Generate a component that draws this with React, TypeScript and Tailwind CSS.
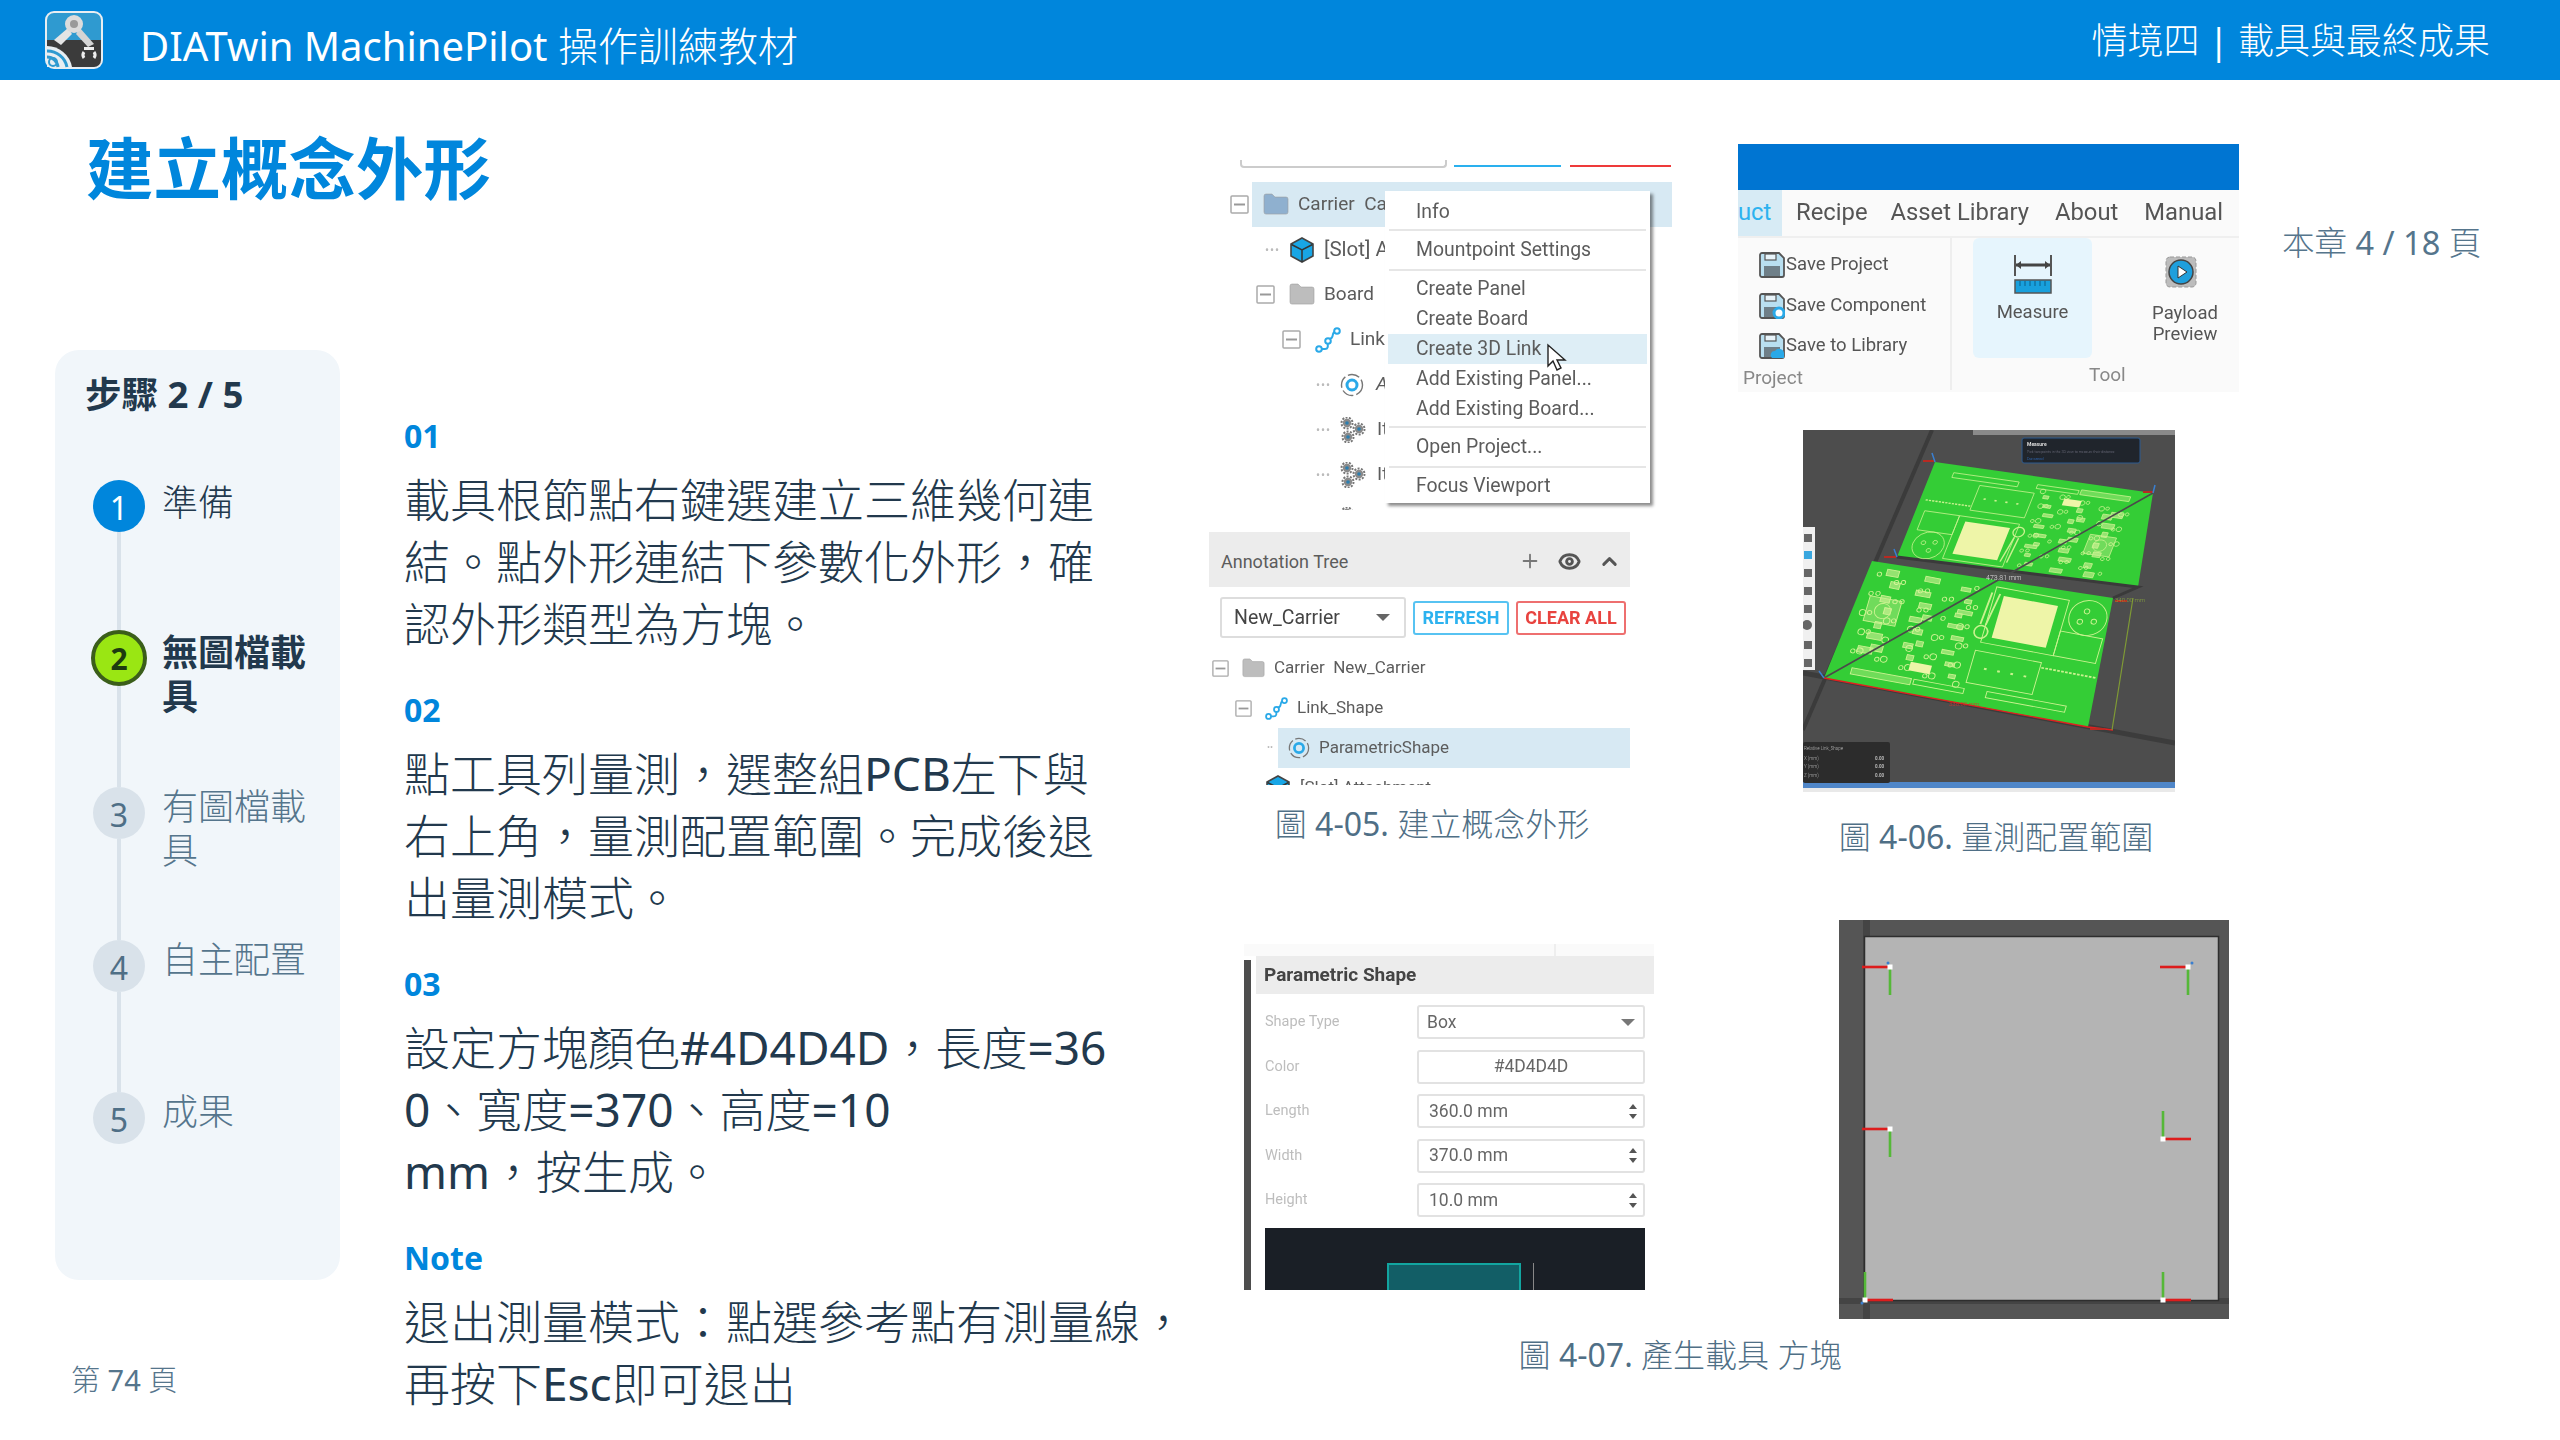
import { ChevronUp, Eye, Plus } from "lucide-react";

const steps = [
  { n: 1, label: ["準備"], state: "done", h: "h-[150px]" },
  { n: 2, label: ["無圖檔載", "具"], state: "active", h: "h-[157px]" },
  { n: 3, label: ["有圖檔載", "具"], state: "todo", h: "h-[153px]" },
  { n: 4, label: ["自主配置"], state: "todo", h: "h-[152px]" },
  { n: 5, label: ["成果"], state: "todo", h: "h-[100px]" },
];

const sections = [
  { tag: "01", lines: ["載具根節點右鍵選建立三維幾何連", "結。點外形連結下參數化外形，確", "認外形類型為方塊。"] },
  { tag: "02", lines: ["點工具列量測，選整組PCB左下與", "右上角，量測配置範圍。完成後退", "出量測模式。"] },
  { tag: "03", lines: ["設定方塊顏色#4D4D4D，長度=36", "0、寬度=370、高度=10", "mm，按生成。"] },
  { tag: "Note", lines: ["退出測量模式：點選參考點有測量線，", "再按下Esc即可退出"] },
];

// CJK stays light, latin runs and digits go back to regular weight
function Mixed({ t }: { t: string }) {
  return (
    <>
      {t.split(/([A-Za-z0-9#=\-./ ]+)/).map((part, i) =>
        i % 2 === 1 ? (
          <span key={i} className="font-normal">{part}</span>
        ) : (
          <span key={i}>{part}</span>
        ),
      )}
    </>
  );
}

function Logo() {
  return (
    <svg width="60" height="60" viewBox="0 0 60 60" className="shrink-0">
      <rect x="1" y="1" width="58" height="58" rx="9" fill="#e8eef2" />
      <path d="M3 30V10a7 7 0 0 1 7-7h40a7 7 0 0 1 7 7v20z" fill="#2f9ad0" />
      <path d="M3 30h54v20a7 7 0 0 1-7 7H10a7 7 0 0 1-7-7z" fill="#3b3b3b" />
      <path d="M10 30 L24 18 L28 24 L17 35z" fill="#e4e4e4" />
      <path d="M50 34 L36 18 L32 24 L44 37z" fill="#d4d4d4" />
      <circle cx="30" cy="14" r="9" fill="#dcdcdc" />
      <circle cx="30" cy="14" r="4" fill="#9a9a9a" />
      <path d="M40 42a5 5 0 0 0 0 6M50 42a5 5 0 0 1 0 6" fill="none" stroke="#eee" strokeWidth="3" />
      <rect x="40" y="37" width="10" height="3" fill="#eee" />
      <path d="M3 36a26 26 0 0 1 25 21H3z" fill="#e8eef2" />
      <path d="M3 41a20 20 0 0 1 20 16M3 47a11 11 0 0 1 11 10" fill="none" stroke="#2f9ad0" strokeWidth="3" />
      <circle cx="9" cy="52" r="4" fill="none" stroke="#2f9ad0" strokeWidth="2" />
    </svg>
  );
}

function MinusBox({ size = 19 }: { size?: number }) {
  return (
    <svg width={size} height={size} viewBox="0 0 19 19" className="shrink-0">
      <rect x="1" y="1" width="17" height="17" rx="1" fill="#fff" stroke="#aaa" strokeWidth="1.5" />
      <rect x="4" y="8.5" width="11" height="2" fill="#999" />
    </svg>
  );
}

function Folder({ color = "#bdbdbd", w = 26 }: { color?: string; w?: number }) {
  return (
    <svg width={w} height={w * 0.85} viewBox="0 0 26 22" className="shrink-0">
      <path d="M1 3a2 2 0 0 1 2-2h6l3 3h11a2 2 0 0 1 2 2v13a2 2 0 0 1-2 2H3a2 2 0 0 1-2-2z" fill={color} stroke="#9d9d9d" strokeWidth="0.6" />
    </svg>
  );
}

function Cube() {
  return (
    <svg width="26" height="26" viewBox="0 0 26 26" className="shrink-0">
      <path d="M13 1 L24 7 V19 L13 25 L2 19 V7z" fill="#18a6e6" stroke="#444" strokeWidth="1.6" />
      <path d="M2.5 7.5 L13 13 L23.5 7.5 M13 13V25" fill="none" stroke="#333" strokeWidth="1.5" />
    </svg>
  );
}

function LinkIcon({ w = 26 }: { w?: number }) {
  return (
    <svg width={w} height={w} viewBox="0 0 26 26" className="shrink-0">
      <path d="M6 22 H10 C16 22 10 12 14 12 C20 12 16 5 20 5" fill="none" stroke="#2aa9e8" strokeWidth="2" />
      <circle cx="4" cy="22" r="2.8" fill="#fff" stroke="#2aa9e8" strokeWidth="2" />
      <circle cx="13" cy="14" r="2.8" fill="#fff" stroke="#2aa9e8" strokeWidth="2" />
      <circle cx="22" cy="4" r="2.8" fill="#fff" stroke="#2aa9e8" strokeWidth="2" />
    </svg>
  );
}

function ParamIcon({ w = 24 }: { w?: number }) {
  return (
    <svg width={w} height={w} viewBox="0 0 24 24" className="shrink-0">
      <circle cx="12" cy="12" r="10.5" fill="none" stroke="#777" strokeWidth="1.4" strokeDasharray="12 3" />
      <circle cx="12" cy="12" r="5" fill="none" stroke="#2aa9e8" strokeWidth="3" />
    </svg>
  );
}

function Gears() {
  const gear = (cx: number, cy: number) => (
    <g key={`${cx}-${cy}`}>
      <circle cx={cx} cy={cy} r="5.5" fill="none" stroke="#777" strokeWidth="2" strokeDasharray="2 1.4" />
      <circle cx={cx} cy={cy} r="4.2" fill="#8a8a8a" />
      <circle cx={cx} cy={cy} r="1.8" fill="#2b7fb0" />
    </g>
  );
  return (
    <svg width="26" height="26" viewBox="0 0 26 26" className="shrink-0">
      {gear(7, 6)}
      {gear(19, 12)}
      {gear(8, 20)}
    </svg>
  );
}

function Dots() {
  return <span className="shrink-0 w-[13px] text-[#bbb] text-[12px] leading-none tracking-[1px]">•••</span>;
}

function ContextMenu() {
  const Sep = () => <div className="h-[2px] mx-[4px] my-[2px] bg-[#e6e6e6]" />;
  const Item = ({ t, hi }: { t: string; hi?: boolean }) => (
    <div className={`h-[30px] mx-[3px] pl-[28px] flex items-center ${hi ? "bg-[#deeef6]" : ""}`}>{t}</div>
  );
  return (
    <div className="absolute left-[176px] top-[31px] w-[265px] h-[312px] bg-white shadow-[3px_3px_3px_rgba(0,0,0,0.45)] text-[19.4px] text-[#5c5c5c] pt-[6px]">
      <Item t="Info" />
      <Sep />
      <div className="py-[2px]"><Item t="Mountpoint Settings" /></div>
      <Sep />
      <div className="pt-[1px]">
        <Item t="Create Panel" />
        <Item t="Create Board" />
        <Item t="Create 3D Link" hi />
        <Item t="Add Existing Panel..." />
        <Item t="Add Existing Board..." />
      </div>
      <Sep />
      <div className="py-[2px]"><Item t="Open Project..." /></div>
      <Sep />
      <div className="pt-[1px]"><Item t="Focus Viewport" /></div>
      <svg width="22" height="30" viewBox="0 0 22 30" className="absolute left-[161px] top-[152px]">
        <path d="M2 2 L2 23 L7 18 L11 27 L15 25 L11 17 L19 17z" fill="#fff" stroke="#222" strokeWidth="1.4" />
      </svg>
    </div>
  );
}

function TreeFigure() {
  return (
    <div className="w-[463px] text-[#5c5c5c] font-normal blur-[0.5px] font-['Roboto',sans-serif]">
      <div className="relative h-[350px] overflow-hidden">
        <div className="flex gap-[7px] h-[22px] pl-[31px]">
          <div className="w-[207px] h-[8px] border-b-2 border-x-2 border-[#ccc] rounded-b-[4px]" />
          <div className="w-[107px] h-[7px] border-b-2 border-[#2ab0ee] ml-[0px]" />
          <div className="w-[101px] h-[7px] border-b-2 border-[#ee3a3a] ml-[2px]" />
        </div>
        <div className="text-[19px]">
          <div className="flex items-center h-[45px] pl-[21px]">
            <MinusBox />
            <div className="flex-1 h-full ml-[3px] pl-[11px] flex items-center gap-[9px] bg-[#d7e9f3]">
              <Folder color="#8fb0cf" /> Carrier&nbsp;&nbsp;Carrier
            </div>
          </div>
          <div className="flex items-center h-[45px] pl-[56px] gap-[11px]">
            <Dots />
            <Cube /> <span className="ml-[-2px] text-[20.5px]">[Slot] Attachment</span>
          </div>
          <div className="flex items-center h-[45px] pl-[47px]">
            <MinusBox />
            <div className="ml-[14px] flex items-center gap-[9px]"><Folder /> Board</div>
          </div>
          <div className="flex items-center h-[45px] pl-[73px]">
            <MinusBox />
            <div className="ml-[14px] flex items-center gap-[9px]"><LinkIcon /> Link_Shape</div>
          </div>
          <div className="flex items-center h-[45px] pl-[107px] gap-[11px]">
            <Dots /> <ParamIcon /> <i className="ml-[1px]">A</i>
          </div>
          <div className="flex items-center h-[45px] pl-[107px] gap-[11px]">
            <Dots /> <Gears /> <span>Item</span>
          </div>
          <div className="flex items-center h-[45px] pl-[107px] gap-[11px]">
            <Dots /> <Gears /> <span>Item</span>
          </div>
          <div className="flex items-center h-[45px] pl-[107px] gap-[11px]">
            <Dots /> <Gears /> <span>Item</span>
          </div>
        </div>
        <ContextMenu />
      </div>
      <div className="mt-[22px] w-[421px] h-[253px] overflow-hidden">
        <div className="h-[55px] bg-[#ececec] flex items-center pl-[12px] pr-[9px] text-[18px]">
          <span className="flex-1 mt-[3px]">Annotation Tree</span>
          <Plus size={22} className="text-[#777] mr-[17px] mt-[3px]" />
          <Eye size={23} strokeWidth={3} className="text-[#555] mr-[17px] mt-[3px]" />
          <ChevronUp size={23} strokeWidth={3} className="text-[#555] mt-[3px]" />
        </div>
        <div className="flex items-center mt-[10px] pl-[11px] gap-[7px]">
          <div className="w-[186px] h-[41px] border-2 border-[#ddd] rounded-[3px] flex items-center justify-between pl-[12px] pr-[14px] text-[19.5px] text-[#444]">
            New_Carrier
            <span className="w-0 h-0 border-x-[7px] border-x-transparent border-t-[7px] border-t-[#666]" />
          </div>
          <div className="w-[96px] h-[34px] border-2 border-[#57c3f2] rounded-[3px] flex items-center justify-center text-[18px] font-bold text-[#2cb2ef]">REFRESH</div>
          <div className="w-[110px] h-[34px] border-2 border-[#ee6f6f] rounded-[3px] flex items-center justify-center text-[18px] font-bold text-[#e8433f]">CLEAR ALL</div>
        </div>
        <div className="text-[17px] mt-[10px]">
          <div className="flex items-center h-[40px] pl-[3px]">
            <MinusBox size={17} />
            <div className="ml-[13px] flex items-center gap-[9px]"><Folder w={23} /> Carrier&nbsp;&nbsp;New_Carrier</div>
          </div>
          <div className="flex items-center h-[40px] pl-[26px]">
            <MinusBox size={17} />
            <div className="ml-[13px] flex items-center gap-[9px]"><LinkIcon w={23} /> Link_Shape</div>
          </div>
          <div className="flex items-center h-[40px] pl-[58px]">
            <span className="w-[11px] text-[#bbb] text-[9px] shrink-0">••</span>
            <div className="flex-1 h-full bg-[#d7e9f3] pl-[10px] flex items-center gap-[9px]"><ParamIcon w={22} /> ParametricShape</div>
          </div>
          <div className="flex items-center h-[40px] pl-[56px] gap-[9px]"><Cube /> [Slot] Attachment</div>
        </div>
      </div>
    </div>
  );
}

function FloppyIcon({ badge }: { badge?: string }) {
  return (
    <svg width="26" height="26" viewBox="0 0 26 26" className="shrink-0">
      <path d="M1 3a2 2 0 0 1 2-2h17l5 5v17a2 2 0 0 1-2 2H3a2 2 0 0 1-2-2z" fill="#b9dff0" stroke="#555" strokeWidth="1.8" />
      <rect x="6" y="2" width="11" height="6" fill="#e8f4fa" stroke="#555" strokeWidth="1.2" />
      <rect x="5" y="14" width="16" height="10" fill="#6f7f88" />
      {badge === "gear" && <circle cx="20" cy="20" r="5" fill="#fff" stroke="#2aa9e8" strokeWidth="3" />}
      {badge === "cloud" && <path d="M13 25a4 4 0 0 1 3-7 5 5 0 0 1 9 2v5z" fill="#2aa9e8" />}
    </svg>
  );
}

function ToolbarFigure() {
  return (
    <div className="w-[501px] h-[248px] bg-[#fafafa] text-[#555] font-normal blur-[0.5px] font-['Roboto',sans-serif]">
      <div className="h-[46px] bg-[#0075d2]" />
      <div className="h-[48px] flex items-center border-b-2 border-[#efefef] text-[23.8px]">
        <div className="w-[44px] h-full bg-[#d7ebf5] text-[#2cb2ef] flex items-center overflow-hidden">uct</div>
        <span className="ml-[14px]">Recipe</span>
        <span className="ml-[23px]">Asset Library</span>
        <span className="ml-[26px]">About</span>
        <span className="ml-[26px]">Manual</span>
      </div>
      <div className="flex h-[152px] text-[18.5px]">
        <div className="w-[214px] border-r-2 border-[#eee] pt-[7px] pl-[21px]">
          <div className="flex items-center gap-[1px] h-[40px]"><FloppyIcon /> Save Project</div>
          <div className="flex items-center gap-[1px] h-[41px]"><FloppyIcon badge="gear" /> Save Component</div>
          <div className="flex items-center gap-[1px] h-[40px]"><FloppyIcon badge="cloud" /> Save to Library</div>
          <div className="ml-[-16px] mt-[-2px] text-[19px] text-[#888]">Project</div>
        </div>
        <div className="flex-1 flex flex-col">
          <div className="flex h-[120px]">
            <div className="ml-[21px] w-[119px] h-[120px] bg-[#e6f5fd] rounded-[6px] flex flex-col items-center pt-[16px]">
              <svg width="40" height="40" viewBox="0 0 40 40">
                <path d="M2 1V22M38 1V22" fill="none" stroke="#555" strokeWidth="2" />
                <path d="M3 11H37" fill="none" stroke="#444" strokeWidth="3" />
                <path d="M8 7 L3 11 L8 15zM32 7 L37 11 L32 15z" fill="#444" />
                <rect x="2" y="26" width="36" height="13" fill="#18a0dd" stroke="#555" strokeWidth="1.5" />
                <path d="M7 27v5M12 27v5M17 27v5M22 27v5M27 27v5M32 27v5" stroke="#0d5f8a" strokeWidth="1" />
              </svg>
              <span className="mt-[5px]">Measure</span>
            </div>
            <div className="ml-[57px] w-[72px] flex flex-col items-center pt-[17px] leading-[21px] text-center">
              <svg width="34" height="34" viewBox="0 0 34 34" className="mr-[8px]">
                <rect x="2" y="2" width="30" height="30" rx="4" fill="#bcbcbc" stroke="#999" strokeDasharray="4 2" />
                <circle cx="17" cy="17" r="12" fill="#1f9fdc" stroke="#444" strokeWidth="1.5" />
                <path d="M14 11 L23 17 L14 23z" fill="#fff" stroke="#333" />
              </svg>
              <span className="mt-[14px]">Payload Preview</span>
            </div>
          </div>
          <div className="ml-[137px] mt-[3px] text-[19px] text-[#888]">Tool</div>
        </div>
      </div>
    </div>
  );
}

// silkscreen of one board, drawn flat on a 200x100 board and skewed into place
function BoardSilk({ m }: { m: string }) {
  const dots = Array.from({ length: 46 }, (_, i) => [104 + (i * 37) % 92, 14 + (i * 53) % 78]);
  const pads = Array.from({ length: 26 }, (_, i) => [106 + (i * 29) % 86, 18 + (i * 41) % 72, 5 + (i % 4) * 2, 3 + (i % 3)]);
  return (
    <g transform={`matrix(${m})`} fill="none" stroke="#c9f28f" strokeWidth="0.7">
      <rect x="20" y="8" width="60" height="5" />
      <rect x="97" y="8" width="38" height="4" />
      <rect x="137" y="7" width="45" height="5" fill="#c9f28f" fillOpacity="0.4" />
      <path d="M5 39h42" strokeWidth="1.4" strokeDasharray="2 1" />
      <rect x="47" y="17" width="50" height="26" />
      <rect x="8" y="50" width="32" height="20" />
      <rect x="40" y="50" width="55" height="45" />
      <rect x="47" y="55" width="41" height="34" fill="#eef5a8" stroke="none" />
      <circle cx="23" cy="84" r="14" />
      <circle cx="18" cy="82" r="2" />
      <circle cx="28" cy="80" r="2" />
      <circle cx="25" cy="89" r="2" />
      <circle cx="97" cy="58" r="5" strokeWidth="1.2" />
      <path d="M95 64l-4 26M99 64l-2 26" strokeWidth="1.4" />
      <path d="M55 30h2M65 30h2M75 30h2M85 30h2" strokeWidth="1.6" />
      {dots.map(([x, y], i) => (
        <circle key={i} cx={x} cy={y} r={i % 3 === 0 ? 2.4 : 1.6} />
      ))}
      {pads.map(([x, y, w, h], i) => (
        <rect key={i} x={x} y={y} width={w} height={h} fill="#e2f5a0" fillOpacity="0.55" />
      ))}
      <rect x="160" y="50" width="24" height="20" fill="#e2f5a0" fillOpacity="0.35" />
      <circle cx="172" cy="60" r="6" />
      <rect x="125" y="18" width="16" height="7" fill="#eef5a8" stroke="none" />
    </g>
  );
}

function PcbFigure() {
  return (
    <svg viewBox="0 0 372 362" width="372" height="362" className="block blur-[0.6px]">
      <rect width="372" height="362" fill="#4d4d4d" />
      <rect y="352" width="372" height="6" fill="#4f86c8" />
      <rect y="358" width="372" height="4" fill="#e9e9e9" />
      <rect x="170" width="202" height="5" fill="#8a8a8a" />
      <path d="M129 0 L0 300" stroke="#3b3b3b" strokeWidth="4" />
      <path d="M0 243 L372 313" stroke="#3c3c3c" strokeWidth="5" />
      <polygon points="132,32 350,63 335,157 94,127" fill="#34cd36" />
      <polygon points="69,131 310,168 285,297 21,248" fill="#34cd36" />
      <path d="M94 127 L335 157 L310 168" fill="none" stroke="#3a3a3a" strokeWidth="3" />
      <BoardSilk m="1.09 0.155 -0.38 0.95 132 32" />
      <BoardSilk m="-1.32 -0.245 0.36 -1.23 285 297" />
      <path d="M21 248 L350 63" stroke="#4a4a4a" strokeWidth="1.6" />
      <path d="M21 248 L285 297 L310 300" stroke="#e02020" strokeWidth="1.4" fill="none" />
      <path d="M330 168 L309 300" stroke="#7f9a35" strokeWidth="1.2" />
      <g stroke="#b82a22" strokeWidth="2">
        <path d="M120 31h12M340 62h10M81 127h12M312 171h12M287 299h14" />
      </g>
      <g stroke="#3a7fd0" strokeWidth="1.5">
        <path d="M132 32l-3 -9M350 63l2 -8M94 127l-3 -8M21 248l-5 -7" />
      </g>
      <rect x="219" y="8" width="118" height="25" rx="2" fill="#20252c" stroke="#2d5b8f" />
      <text x="224" y="16" fontSize="5" fontWeight="700" fill="#ddd" fontFamily="Roboto, sans-serif">Measure</text>
      <text x="224" y="23" fontSize="3.6" fill="#778" fontFamily="Roboto, sans-serif">Pick two points in the 3D view to measure their distance</text>
      <text x="224" y="30" fontSize="3.6" fill="#3278d8" fontFamily="Roboto, sans-serif">Esc cancel</text>
      <text x="183" y="150" fontSize="7" fill="#e2e2e2" fontFamily="Roboto, sans-serif">473.81 mm</text>
      <text x="312" y="172" fontSize="6" fill="#8aa83d" fontFamily="Roboto, sans-serif">340.00 mm</text>
      <text x="146" y="276" fontSize="6" fill="#d8302a" fontFamily="Roboto, sans-serif">338.00 mm</text>
      <rect y="97" width="12" height="143" fill="#f0f0f0" />
      <g fill="#666">
        <rect x="1" y="104" width="8" height="8" />
        <rect x="1" y="121" width="8" height="8" fill="#3aa7df" />
        <rect x="1" y="139" width="8" height="8" />
        <rect x="1" y="157" width="8" height="8" />
        <rect x="1" y="175" width="8" height="8" />
        <circle cx="4" cy="195" r="5" />
        <rect x="1" y="211" width="8" height="8" />
        <rect x="1" y="229" width="8" height="8" />
      </g>
      <rect y="312" width="87" height="41" rx="2" fill="#2c2c2c" />
      <g fill="#bbb" fontSize="4.5" fontFamily="Roboto, sans-serif">
        <text x="1" y="320">Relative Link_Shape</text>
        <text x="1" y="330">X (mm)</text>
        <text x="72" y="330" fontWeight="700">0.00</text>
        <text x="1" y="338">Y (mm)</text>
        <text x="72" y="338" fontWeight="700">0.00</text>
        <text x="1" y="347">Z (mm)</text>
        <text x="72" y="347" fontWeight="700">0.00</text>
      </g>
    </svg>
  );
}

function ParamFigure() {
  const Num = ({ v }: { v: string }) => (
    <div className="w-[228px] h-[34px] bg-white border-2 border-[#e2e2e2] rounded-[3px] flex items-center justify-between pl-[10px] pr-[6px] text-[17.5px] text-[#666]">
      {v}
      <span className="flex flex-col gap-[5px]">
        <span className="w-0 h-0 border-x-[4px] border-x-transparent border-b-[5px] border-b-[#555]" />
        <span className="w-0 h-0 border-x-[4px] border-x-transparent border-t-[5px] border-t-[#555]" />
      </span>
    </div>
  );
  const Label = ({ t }: { t: string }) => <span className="w-[152px] text-[14.5px] text-[#bdbdbd] shrink-0">{t}</span>;
  return (
    <div className="w-[410px] h-[346px] font-normal blur-[0.5px] font-['Roboto',sans-serif] flex flex-col">
      <div className="h-[12px] bg-[#fafafa] flex justify-end pr-[98px]"><span className="w-[2px] bg-[#eee]" /></div>
      <div className="flex flex-1 min-h-0">
        <div className="w-[7px] bg-[#4d4d4d] mt-[4px] mr-[5px]" />
        <div className="flex-1 flex flex-col">
          <div className="h-[38px] bg-[#ececec] flex items-center pl-[8px] text-[19px] font-bold text-[#444]">Parametric Shape</div>
          <div className="pl-[9px] pr-[9px] flex flex-col gap-[10.5px] pt-[11px]">
            <div className="flex items-center">
              <Label t="Shape Type" />
              <div className="w-[228px] h-[34px] border-2 border-[#e2e2e2] rounded-[3px] flex items-center justify-between pl-[8px] pr-[8px] text-[17.5px] text-[#666]">
                Box
                <span className="w-0 h-0 border-x-[7px] border-x-transparent border-t-[7px] border-t-[#777]" />
              </div>
            </div>
            <div className="flex items-center">
              <Label t="Color" />
              <div className="w-[228px] h-[34px] border-2 border-[#e2e2e2] rounded-[3px] flex items-center justify-center text-[17.5px] text-[#666]">#4D4D4D</div>
            </div>
            <div className="flex items-center"><Label t="Length" /><Num v="360.0 mm" /></div>
            <div className="flex items-center"><Label t="Width" /><Num v="370.0 mm" /></div>
            <div className="flex items-center"><Label t="Height" /><Num v="10.0 mm" /></div>
          </div>
          <div className="mx-[9px] mt-[11px] flex-1 bg-[#1a1f26] flex items-end pl-[122px] gap-[12px] overflow-hidden">
            <div className="w-[134px] h-[27px] border-2 border-b-0 border-[#12a5a0] bg-[#125e66]" />
            <div className="w-[1px] h-[27px] bg-[#888]" />
          </div>
        </div>
      </div>
    </div>
  );
}

function Marker({ x, y, redDir, greenDir }: { x: number; y: number; redDir: number; greenDir: number }) {
  return (
    <g>
      <path d={`M${x} ${y}h${redDir * 28}`} stroke="#dd1c1c" strokeWidth="2.6" />
      <path d={`M${x} ${y}v${greenDir * 28}`} stroke="#55b838" strokeWidth="2.6" />
      <rect x={x - 2.5} y={y - 2.5} width="5" height="5" fill="#fff" />
    </g>
  );
}

function TopViewFigure() {
  return (
    <svg viewBox="0 0 390 399" width="390" height="399" className="block blur-[0.4px]">
      <rect width="390" height="399" fill="#555" />
      <rect x="24" width="7" height="399" fill="#444" />
      <rect y="378" width="390" height="6" fill="#444" />
      <rect x="25.5" y="16.5" width="354" height="364" fill="#b4b4b4" stroke="#2e2e2e" strokeWidth="1.5" />
      <Marker x={51} y={47} redDir={-1} greenDir={1} />
      <Marker x={349} y={47} redDir={-1} greenDir={1} />
      <Marker x={51} y={209} redDir={-1} greenDir={1} />
      <Marker x={324} y={219} redDir={1} greenDir={-1} />
      <Marker x={26} y={380} redDir={1} greenDir={-1} />
      <Marker x={324} y={380} redDir={1} greenDir={-1} />
      <circle cx="353" cy="43" r="1.5" fill="#3a7fd0" />
      <circle cx="49" cy="43" r="1.5" fill="#3a7fd0" />
      <circle cx="23" cy="383" r="1.5" fill="#3a7fd0" />
    </svg>
  );
}

export default function App() {
  return (
    <div className="w-[2560px] h-[1440px] bg-white overflow-hidden font-light font-['Noto_Sans','Noto_Sans_CJK_TC',sans-serif] text-[#22394d]">
      <header className="h-[80px] bg-[#0086dc] flex items-center justify-between pl-[44px] pr-[70px] text-white">
        <div className="flex items-center">
          <Logo />
          <span className="ml-[36px] text-[40px] mt-[12px]"><Mixed t="DIATwin MachinePilot 操作訓練教材" /></span>
        </div>
        <span className="text-[36px] mt-[2px]">情境四 <span className="font-normal">|</span> 載具與最終成果</span>
      </header>

      <main className="flex h-[1360px]">
        <div className="w-[1180px] shrink-0">
          <h1 className="ml-[86px] mt-[43px] h-[90px] text-[67.5px] leading-[90px] font-bold text-[#0086dc]">建立概念外形</h1>
          <div className="flex mt-[137px]">
            <div className="flex flex-col ml-[55px]">
              <aside className="w-[285px] h-[930px] bg-[#f1f6fa] rounded-[24px] pl-[31px] pt-[17px]">
                <div className="text-[36.5px] leading-[54px] font-bold ml-[-1px]">步驟 2 / 5</div>
                <div className="mt-[59px]">
                  {steps.map((s) => (
                    <div key={s.n} className={`flex ${s.h}`}>
                      <div className="w-[66px] flex flex-col items-center shrink-0">
                        {s.state === "done" && <div className="w-[52px] h-[52px] rounded-full bg-[#0086dc] text-white font-normal text-[32px] flex items-center justify-center pt-[4px] shrink-0">{s.n}</div>}
                        {s.state === "active" && <div className="w-[56px] h-[56px] rounded-full bg-[#9ae613] border-[4px] border-[#3b5e1a] text-[#1d3a10] font-bold text-[30px] flex items-center justify-center shrink-0">{s.n}</div>}
                        {s.state === "todo" && <div className="w-[52px] h-[52px] rounded-full bg-[#d9e2ea] text-[#4f6f86] font-normal text-[32px] flex items-center justify-center pt-[4px] shrink-0">{s.n}</div>}
                        {s.n < 5 && <div className="w-[4px] flex-1 bg-[#d9e2ea]" />}
                      </div>
                      <div className={`ml-[10px] text-[36px] leading-[44px] ${s.state === "todo" ? "text-[#55758c] mt-[-2px]" : "mt-[1px]"} ${s.state === "active" ? "font-bold" : ""}`}>
                        {s.label.map((l) => (
                          <div key={l}>{l}</div>
                        ))}
                      </div>
                    </div>
                  ))}
                </div>
              </aside>
              <div className="ml-[16px] mt-[78px] text-[29px] leading-[44px] text-[#55758c]"><Mixed t="第 74 頁" /></div>
            </div>
            <div className="ml-[64px] mt-[64px] flex flex-col gap-[34px]">
              {sections.map((sec) => (
                <section key={sec.tag}>
                  <div className="text-[32px] leading-[44px] font-bold text-[#0086dc] mb-[10px]">{sec.tag}</div>
                  <div className="text-[46px] leading-[62px] whitespace-nowrap">
                    {sec.lines.map((l) => (
                      <div key={l}><Mixed t={l} /></div>
                    ))}
                  </div>
                </section>
              ))}
            </div>
          </div>
        </div>

        <div className="flex-1 flex flex-col">
          <div className="flex h-[840px] items-start">
            <div className="ml-[29px] mt-[80px]">
              <TreeFigure />
              <div className="mt-[17px] text-[32px] leading-[44px] text-[#4f6f86] text-center w-[446px]"><Mixed t="圖 4-05. 建立概念外形" /></div>
            </div>
            <div className="ml-[66px] mt-[64px]">
              <ToolbarFigure />
              <div className="ml-[65px] mt-[38px] w-[372px]"><PcbFigure /></div>
              <div className="mt-[23px] text-[32px] leading-[44px] text-[#4f6f86] text-center w-[516px]"><Mixed t="圖 4-06. 量測配置範圍" /></div>
            </div>
            <div className="ml-[28px] mt-[141px] text-[32.5px] leading-[44px] text-[#55758c] whitespace-nowrap"><Mixed t="本章 4 / 18 頁" /></div>
          </div>
          <div className="flex items-start">
            <div className="ml-[64px] mt-[24px]"><ParamFigure /></div>
            <div className="ml-[185px]"><TopViewFigure /></div>
          </div>
          <div className="mt-[14px] text-[32px] leading-[44px] text-[#4f6f86] text-center w-[1000px]"><Mixed t="圖 4-07. 產生載具 方塊" /></div>
        </div>
      </main>
    </div>
  );
}
